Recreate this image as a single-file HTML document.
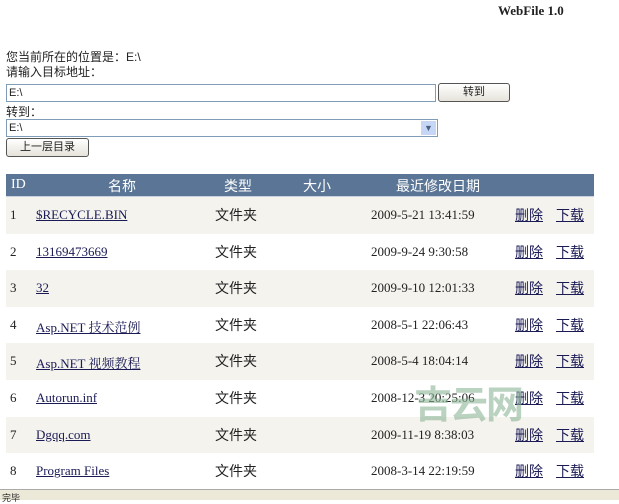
<!DOCTYPE html>
<html><head><meta charset="utf-8"><style>
*{margin:0;padding:0;box-sizing:border-box}
body{width:619px;height:500px;background:#fff;position:relative;overflow:hidden;font-family:"Liberation Serif","Noto Serif CJK SC",serif;font-size:13px;color:#222}
.a{position:absolute;white-space:nowrap}
.cj{font-family:"Liberation Sans","Noto Sans CJK SC",sans-serif;font-size:12px}
.inp{position:absolute;border:1px solid #7f9db9;background:#fff;font-family:"Liberation Sans",sans-serif;font-size:11px;padding-left:2px;line-height:16px}
.btn{position:absolute;border:1px solid #555;border-radius:3px;background:linear-gradient(#fff,#e6e3da);text-align:center;font-family:"Liberation Sans","Noto Sans CJK SC",sans-serif;font-size:11px}
.hdr{position:absolute;left:6px;top:174px;width:588px;height:24px;background:#5a7595;border-bottom:2px solid #c9d3df;color:#fff;font-size:14px}
.row{position:absolute;left:6px;width:588px;height:36.5px}
.row span{position:absolute;top:10px;white-space:nowrap}
u{color:#1a1a55}
</style></head><body>
<div class="a" style="left:498px;top:3px;font-weight:bold;font-size:13px">WebFile 1.0</div>
<div class="a cj" style="left:6px;top:50px;line-height:15px">您当前所在的位置是：E:\<br>请输入目标地址：</div>
<div class="inp" style="left:6px;top:84px;width:430px;height:18px">E:\</div>
<div class="btn" style="left:438px;top:83px;width:72px;height:19px;line-height:17px">转到</div>
<div class="a cj" style="left:6px;top:103px">转到：</div>
<div class="inp" style="left:6px;top:119px;width:432px;height:18px">E:\</div>
<div style="position:absolute;left:421px;top:121px;width:15px;height:14px;background:#c6d6f5;color:#4d6185;font-size:9px;text-align:center;line-height:14px">▼</div>
<div class="btn" style="left:6px;top:138px;width:83px;height:19px;line-height:16px">上一层目录</div>
<div class="hdr">
<span class="a" style="left:5px;top:3px;font-family:'Liberation Serif',serif">ID</span>
<span class="a cj" style="left:102px;top:2px;font-size:14px">名称</span>
<span class="a cj" style="left:218px;top:2px;font-size:14px">类型</span>
<span class="a cj" style="left:297px;top:2px;font-size:14px">大小</span>
<span class="a cj" style="left:390px;top:2px;font-size:14px">最近修改日期</span>
</div>
<div id="rows"></div>
<div class="a" style="left:414px;top:374px;font-family:'Noto Sans CJK SC',sans-serif;font-size:38px;font-weight:bold;color:rgba(140,180,150,0.6);letter-spacing:-2px">吉云网</div>
<div style="position:absolute;left:0;top:489px;width:619px;height:11px;background:#ece9d8;border-top:1px solid #aaa"></div>
<div class="a cj" style="left:2px;top:491px;font-size:9px">完毕</div>
<script>
var d=[["$RECYCLE.BIN","2009-5-21 13:41:59"],["13169473669","2009-9-24 9:30:58"],["32","2009-9-10 12:01:33"],["Asp.NET 技术范例","2008-5-1 22:06:43"],["Asp.NET 视频教程","2008-5-4 18:04:14"],["Autorun.inf","2008-12-3 20:25:06"],["Dgqq.com","2009-11-19 8:38:03"],["Program Files","2008-3-14 22:19:59"]];
var h="";d.forEach(function(r,i){h+='<div class="row" style="top:'+(197+i*36.6)+'px;background:'+(i%2==0?'#f4f3ee':'#fff')+'"><span style="left:4px">'+(i+1)+'</span><span style="left:30px;font-family:\'Liberation Serif\',\'Noto Serif CJK SC\',serif"><u>'+r[0]+'</u></span><span class="cj" style="left:209px;font-size:14px;top:8px">文件夹</span><span style="left:365px">'+r[1]+'</span><span class="cj" style="left:509px;font-size:14px;top:8px"><u>删除</u></span><span class="cj" style="left:550px;font-size:14px;top:8px"><u>下载</u></span></div>'});
document.getElementById("rows").innerHTML=h;
</script>
</body></html>
